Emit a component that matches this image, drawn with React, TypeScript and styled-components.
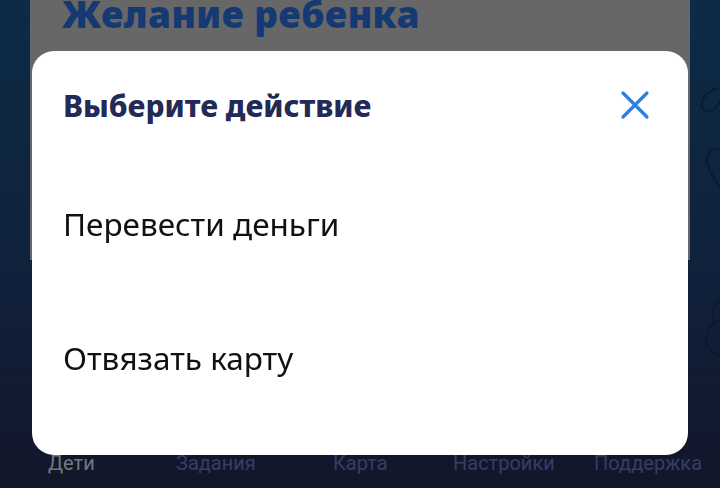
import React from "react";
import styled, { createGlobalStyle } from "styled-components";

const GlobalStyle = createGlobalStyle`
  html, body {
    margin: 0;
    padding: 0;
    width: 720px;
    height: 488px;
    overflow: hidden;
  }
  * {
    box-sizing: border-box;
  }
`;

const NAV_ITEMS = [
  { label: "Дети", active: true },
  { label: "Задания", active: false },
  { label: "Карта", active: false },
  { label: "Настройки", active: false },
  { label: "Поддержка", active: false },
];

const ACTIONS = ["Перевести деньги", "Отвязать карту"];

export default function App() {
  return (
    <>
      <GlobalStyle />
      <Screen>
        <Decor viewBox="0 0 30 488" aria-hidden>
          <path d="M28 88 C14 92 8 104 14 110 C20 114 28 108 30 100" />
          <path d="M30 150 C20 146 14 156 18 166 C22 176 28 184 30 188" />
          <path d="M30 300 C22 304 20 318 26 326" />
          <circle cx="34" cy="338" r="18" />
        </Decor>
        <WishCard>
          <WishTitle>Желание ребенка</WishTitle>
        </WishCard>
        <Spacer />
        <BottomNav>
          {NAV_ITEMS.map((item) => (
            <NavItem key={item.label} $active={item.active}>
              {item.label}
            </NavItem>
          ))}
        </BottomNav>
      </Screen>

      <Overlay>
        <Sheet>
          <SheetHeader>
            <SheetTitle>Выберите действие</SheetTitle>
            <CloseButton aria-label="Закрыть">
              <svg width="30" height="30" viewBox="0 0 30 30">
                <path
                  d="M3 3 L27 27 M27 3 L3 27"
                  stroke="#2b7fe3"
                  strokeWidth="3.2"
                  strokeLinecap="round"
                  fill="none"
                />
              </svg>
            </CloseButton>
          </SheetHeader>
          <ActionList>
            {ACTIONS.map((a) => (
              <ActionItem key={a}>{a}</ActionItem>
            ))}
          </ActionList>
        </Sheet>
      </Overlay>
    </>
  );
}

// styled-components
const Screen = styled.div`
  position: relative;
  width: 720px;
  height: 488px;
  display: flex;
  flex-direction: column;
  background: linear-gradient(180deg, #0c2b47 0%, #10213c 55%, #121629 100%);
  overflow: hidden;
`;

const Decor = styled.svg`
  position: absolute;
  right: 0;
  top: 0;
  width: 30px;
  height: 488px;
  fill: none;
  stroke: #0a1a2c;
  stroke-width: 2;
  opacity: 0.8;
`;

const WishCard = styled.div`
  margin: -40px 30px 0;
  height: 300px;
  background: #676767;
  padding: 29px 32px 0;
`;

const WishTitle = styled.h1`
  margin: 0;
  font-family: "Noto Sans", sans-serif;
  font-weight: 900;
  font-size: 37px;
  line-height: 50px;
  color: #153a73;
  letter-spacing: 0.4px;
`;

const Spacer = styled.div`
  flex: 1;
`;

const BottomNav = styled.nav`
  display: grid;
  grid-template-columns: 128px 157px 120px 141px 1fr;
  padding: 0 0 12px 48px;
  height: 38px;
`;

const NavItem = styled.span<{ $active: boolean }>`
  font-family: "Liberation Sans Narrow", "Roboto", sans-serif;
  font-size: 20px;
  line-height: 26px;
  color: ${(p) => (p.$active ? "#75777f" : "#353d68")};
`;

const Overlay = styled.div`
  position: fixed;
  inset: 0;
  padding: 51px 32px 33px;
  display: flex;
`;

const Sheet = styled.div`
  flex: 1;
  background: #ffffff;
  border-radius: 22px;
  padding: 34px 38px 0 31px;
  display: flex;
  flex-direction: column;
`;

const SheetHeader = styled.div`
  display: flex;
  align-items: center;
  justify-content: space-between;
  height: 40px;
`;

const SheetTitle = styled.h2`
  margin: 0;
  font-family: "Noto Sans", sans-serif;
  font-weight: 800;
  font-size: 30px;
  color: #232a55;
`;

const CloseButton = styled.button`
  border: none;
  background: none;
  padding: 0;
  width: 30px;
  height: 30px;
  display: flex;
  cursor: pointer;
`;

const ActionList = styled.div`
  display: flex;
  flex-direction: column;
  margin-top: 79px;
`;

const ActionItem = styled.div`
  font-family: "Noto Sans", sans-serif;
  font-weight: 400;
  font-size: 31.5px;
  line-height: 40px;
  height: 134px;
  color: #111111;
`;
